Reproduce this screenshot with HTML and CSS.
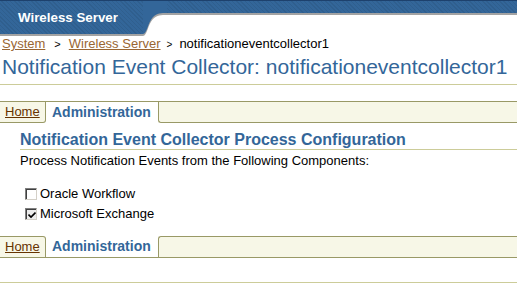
FILE: index.html
```html
<!DOCTYPE html>
<html>
<head>
<meta charset="utf-8">
<title>Notification Event Collector</title>
<link rel="stylesheet" href="styles.css">
</head>
<body>
<header class="brand-bar">
  <div class="brand">Wireless Server</div>
  <svg class="brand-curve" width="24" height="36" viewBox="0 0 24 36" aria-hidden="true">
    <path d="M0 3 H24 V15 C18 15 14 15 10 19 C5 24 4 36 0 36 Z" fill="#a3a3a3"/>
    <path d="M0 1 H24 V13 C18 13 14 13 10 17 C5 22 4 34 0 34 Z" fill="#336699"/>
    <rect x="0" y="0" width="24" height="1" fill="#1d416d"/>
  </svg>
  <div class="brand-strip"></div>
</header>

<nav class="crumbs">
  <a href="#" class="crumb-link">System</a><span class="sep">&gt;</span><a href="#" class="crumb-link">Wireless Server</a><span class="sep sep-last">&gt;</span><span class="crumb-current">notificationeventcollector1</span>
</nav>

<h1 class="title">Notification Event Collector: notificationeventcollector1</h1>

<div class="tabs tabs-top">
  <a href="#" class="tab tab-home">Home</a>
  <span class="tab tab-active">Administration</span>
  <span class="tab-fill"></span>
</div>

<section class="content">
  <h2 class="section-title">Notification Event Collector Process Configuration</h2>
  <p class="intro">Process Notification Events from the Following Components:</p>
  <ul class="checks">
    <li class="check-row"><span class="box"></span>Oracle Workflow</li>
    <li class="check-row"><span class="box box-checked"><svg width="8" height="8" viewBox="0 0 8 8"><path d="M0.5 3.5 L3 6 L7.5 1.5" fill="none" stroke="#000" stroke-width="1.6"/></svg></span>Microsoft Exchange</li>
  </ul>
</section>

<div class="tabs tabs-bottom">
  <a href="#" class="tab tab-home">Home</a>
  <span class="tab tab-active">Administration</span>
  <span class="tab-fill"></span>
</div>

<div class="footer-rule"></div>
</body>
</html>
```

FILE: styles.css
```css
html, body {
  margin: 0;
  padding: 0;
  background: #ffffff;
}

body {
  font-family: "Liberation Sans", Arial, sans-serif;
  font-size: 13px;
  color: #000000;
}

/* ---------- branding bar ---------- */
.brand-bar {
  display: flex;
  align-items: flex-start;
  height: 36px;
}

.brand {
  box-sizing: border-box;
  width: 143px;
  height: 36px;
  padding-left: 18px;
  border-top: 1px solid #1d416d;
  border-bottom: 2px solid #a3a3a3;
  background-color: #336699;
  background-image: repeating-linear-gradient(45deg, rgba(0, 0, 0, 0.07) 0 1px, transparent 1px 3px);
  color: #ffffff;
  font-weight: bold;
  font-size: 13.33px;
  line-height: 33px;
  white-space: nowrap;
}

.brand-curve {
  display: block;
  flex: none;
}

.brand-strip {
  flex: 1;
  box-sizing: border-box;
  height: 15px;
  border-top: 1px solid #1d416d;
  border-bottom: 2px solid #a3a3a3;
  background-color: #336699;
  background-image: repeating-linear-gradient(45deg, rgba(0, 0, 0, 0.07) 0 1px, transparent 1px 3px);
}

/* ---------- breadcrumbs ---------- */
.crumbs {
  padding-left: 2px;
  height: 16px;
  line-height: 16px;
  white-space: nowrap;
}

.crumb-link {
  color: #996633;
  text-decoration: underline;
}

.sep {
  font-size: 11px;
  margin: 0 8px 0 9px;
}

.sep-last {
  font-size: 10px;
  margin: 0 7px 0 6px;
}

.crumb-current {
  color: #000000;
}

/* ---------- page title ---------- */
.title {
  margin: 3px 0 0 0;
  padding-left: 2px;
  height: 29px;
  line-height: 24px;
  font-size: 21px;
  font-weight: normal;
  color: #336699;
  white-space: nowrap;
  border-bottom: 1px solid #cccc99;
}

/* ---------- tabs ---------- */
.tabs {
  display: flex;
  height: 22px;
  box-sizing: border-box;
  white-space: nowrap;
}

.tabs-top {
  margin-top: 16px;
}

.tabs-bottom {
  margin-top: 12px;
}

.tab {
  box-sizing: border-box;
  height: 22px;
  line-height: 20px;
  text-decoration: none;
}

.tab-home {
  width: 46px;
  padding-left: 5px;
  background: #f7f7e7;
  color: #663300;
  text-decoration: underline;
  border-right: 1px solid #999966;
}

.tab-active {
  width: 112px;
  padding-left: 6px;
  background: #ffffff;
  color: #336699;
  font-weight: bold;
  font-size: 14px;
}

.tab-fill {
  flex: 1;
  box-sizing: border-box;
  height: 22px;
  background: #f7f7e7;
  border-left: 1px solid #999966;
}

/* top bar: active tab open to the content below */
.tabs-top .tab-home {
  border-top: 1px solid #999966;
  border-bottom: 1px solid #999966;
  border-bottom-right-radius: 3px;
}

.tabs-top .tab-active {
  border-top: 1px solid #999966;
}

.tabs-top .tab-fill {
  border-top: 1px solid #999966;
  border-bottom: 1px solid #999966;
  border-bottom-left-radius: 3px;
}

/* bottom bar: mirrored, active tab open to the content above */
.tabs-bottom .tab-home {
  border-top: 1px solid #999966;
  border-bottom: 1px solid #999966;
  border-top-right-radius: 3px;
}

.tabs-bottom .tab-active {
  border-bottom: 1px solid #999966;
}

.tabs-bottom .tab-fill {
  border-top: 1px solid #999966;
  border-bottom: 1px solid #999966;
  border-top-left-radius: 3px;
}

/* ---------- content ---------- */
.content {
  padding-left: 20px;
}

.section-title {
  margin: 7px 0 0 0;
  height: 19px;
  line-height: 19px;
  font-size: 16px;
  font-weight: bold;
  color: #336699;
  white-space: nowrap;
  border-bottom: 1px solid #cccc99;
}

.intro {
  margin: 3px 0 0 0;
  line-height: 16px;
  white-space: nowrap;
}

.checks {
  list-style: none;
  margin: 15px 0 0 0;
  padding: 0 0 0 5px;
}

.check-row {
  display: flex;
  align-items: center;
  height: 20px;
  line-height: 20px;
  white-space: nowrap;
}

.box {
  box-sizing: border-box;
  display: flex;
  align-items: center;
  justify-content: center;
  width: 12px;
  height: 12px;
  margin-right: 3px;
  background: #ffffff;
  border-top: 1px solid #808080;
  border-left: 1px solid #808080;
  border-right: 1px solid #d4d0c8;
  border-bottom: 1px solid #d4d0c8;
  box-shadow: inset 1px 1px 0 #404040;
}

.box-checked {
  background: #ececec;
}

.box svg {
  display: block;
  margin: 1px 0 0 1px;
}

.footer-rule {
  margin-top: 24px;
  height: 0;
  border-top: 1px solid #cccc99;
}
```
